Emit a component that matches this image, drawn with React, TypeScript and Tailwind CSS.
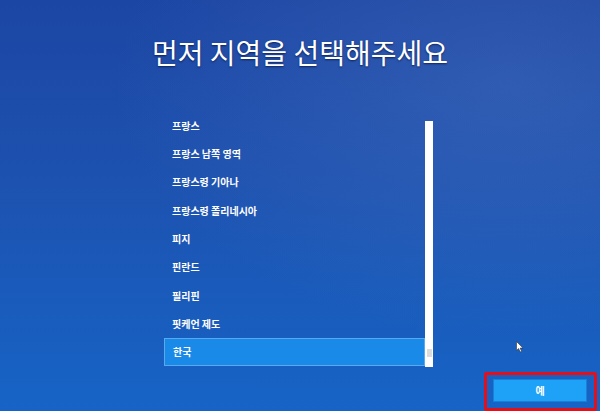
import React from "react";

const items = [
  "프랑스",
  "프랑스 남쪽 영역",
  "프랑스령 기아나",
  "프랑스령 폴리네시아",
  "피지",
  "핀란드",
  "필리핀",
  "핏케언 제도",
  "한국",
];

export default function App() {
  return (
    <div
      className="relative w-[600px] h-[411px] overflow-hidden flex flex-col bg-[linear-gradient(180deg,#1c46a4_0%,#1d52b0_45%,#1664c6_100%)]"
      style={{ fontFamily: '"Noto Sans CJK KR", "Noto Sans", sans-serif' }}
    >
      <div className="absolute inset-0 bg-[radial-gradient(ellipse_at_85%_20%,rgba(120,150,210,0.22),rgba(0,0,0,0)_55%)] pointer-events-none" />
      <div className="relative pt-[35px] text-center text-white text-[28px] leading-[34px] [text-shadow:0_1px_2px_rgba(0,0,30,0.6)]">
        먼저 지역을 선택해주세요
      </div>
      <div className="relative mt-[42px] ml-[164px] flex">
        <div className="w-[261px] flex flex-col">
          {items.map((t, i) => {
            const sel = i === items.length - 1;
            return (
              <div
                key={t}
                className={
                  "h-[28.33px] flex items-center pl-[8px] text-white text-[10px] font-bold " +
                  (sel ? "bg-[#1a8ae8] border border-[#5aa8ee] pl-[7px]" : "")
                }
              >
                {t}
              </div>
            );
          })}
        </div>
        <div className="mt-[10px] w-[8px] h-[246px] bg-white flex flex-col justify-end items-center pb-[10px]">
          <div className="w-[5px] h-[8px] bg-[#dcdcdc]" />
        </div>
      </div>
      <div className="relative mt-[5px] flex justify-end pr-[3px]">
        <div className="w-[113px] h-[39px] border-[3px] border-[#e3101c] rounded-[2px] pt-[4px] pl-[6px]">
          <div className="w-[94px] h-[23px] bg-[#1ea2f7] border border-[#1b7fd6] flex items-center justify-center text-white text-[10px] font-bold">
            예
          </div>
        </div>
      </div>
      <svg
        className="absolute left-[516px] top-[341px]"
        width="8"
        height="12"
        viewBox="0 0 8 12"
      >
        <path d="M0.5 0.5 L0.5 9.5 L2.6 7.6 L4.2 11 L5.6 10.3 L4.1 7.1 L7 7.1 Z" fill="#fff" stroke="#333" strokeWidth="0.6" />
      </svg>
    </div>
  );
}
